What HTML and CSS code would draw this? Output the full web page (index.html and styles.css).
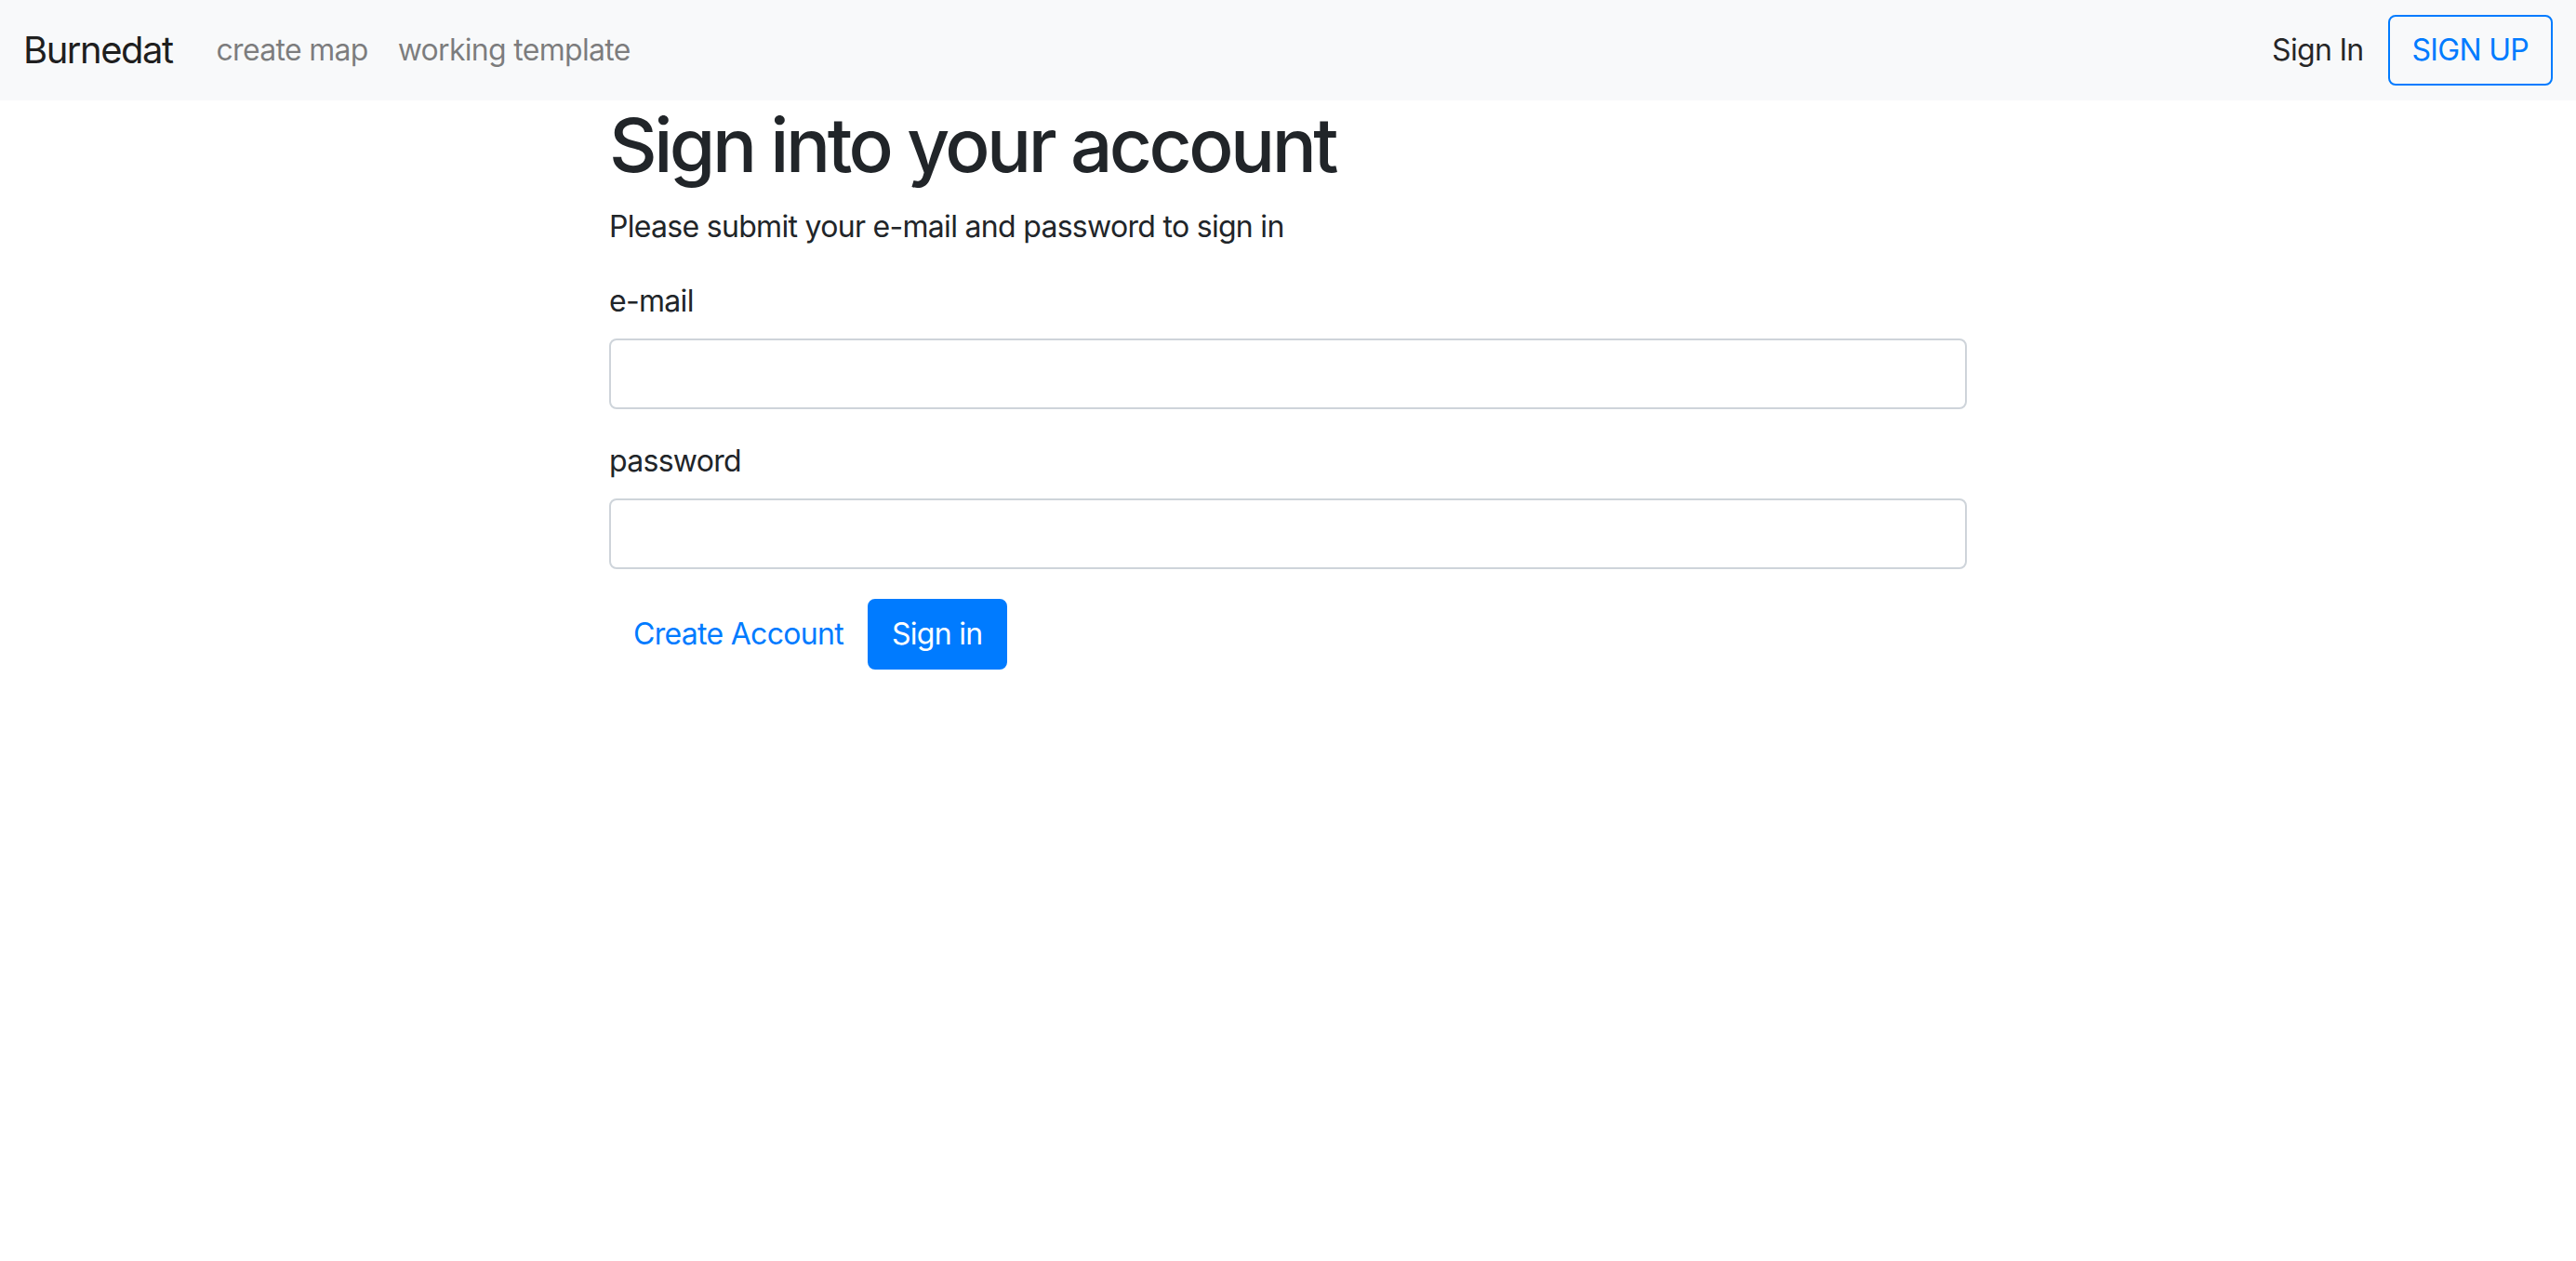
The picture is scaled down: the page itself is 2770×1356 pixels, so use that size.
FILE: index.html
```html
<!DOCTYPE html>
<html lang="en">
<head>
<meta charset="utf-8">
<title>Sign in - Burnedat</title>
<link rel="stylesheet" href="styles.css">
</head>
<body>
<nav class="navbar">
  <a class="brand" href="#">Burnedat</a>
  <ul class="nav-main">
    <li><a class="nav-link" href="#">create map</a></li>
    <li><a class="nav-link" href="#">working template</a></li>
  </ul>
  <div class="nav-right">
    <a class="nav-signin" href="#">Sign In</a>
    <a class="btn btn-outline" href="#">SIGN UP</a>
  </div>
</nav>
<main class="container">
  <h1 class="title">Sign into your account</h1>
  <p class="intro">Please submit your e-mail and password to sign in</p>
  <form class="signin-form">
    <div class="form-group">
      <label class="label" for="email">e-mail</label>
      <input class="input" id="email" type="email">
    </div>
    <div class="form-group">
      <label class="label" for="password">password</label>
      <input class="input" id="password" type="password">
    </div>
    <div class="actions">
      <a class="btn btn-link" href="#">Create Account</a>
      <button class="btn btn-primary" type="submit">Sign in</button>
    </div>
  </form>
</main>
</body>
</html>
```
FILE: styles.css
```css
* { box-sizing: border-box; }
html, body {
  margin: 0;
  padding: 0;
  background: #ffffff;
}
body {
  font-family: Inter, "Noto Sans", "Liberation Sans", sans-serif;
  color: #212529;
  font-size: 32px;
  line-height: 48px;
  letter-spacing: -0.7px;
}
a { text-decoration: none; }

.navbar {
  display: flex;
  align-items: center;
  height: 108px;
  padding: 0 25px 0 25px;
  background: #f8f9fa;
}
.brand {
  font-size: 40px;
  line-height: 60px;
  margin-right: 31px;
  letter-spacing: -1.5px;
  color: rgba(0, 0, 0, 0.9);
}
.nav-main {
  display: flex;
  list-style: none;
  margin: 0;
  padding: 0;
}
.nav-link {
  display: block;
  padding: 16px 16px;
  font-size: 32px;
  line-height: 48px;
  color: rgba(0, 0, 0, 0.5);
}
.nav-right {
  margin-left: auto;
  display: flex;
  align-items: center;
}
.nav-signin {
  padding: 16px 16px;
  margin-right: 10px;
  color: rgba(0, 0, 0, 0.86);
}

.btn {
  display: inline-block;
  font-family: inherit;
  font-size: 32px;
  line-height: 48px;
  letter-spacing: -0.7px;
  padding: 12px 24px;
  border: 2px solid transparent;
  border-radius: 8px;
  background: transparent;
  cursor: pointer;
}
.btn-outline {
  color: #007bff;
  border-color: #007bff;
}
.btn-link {
  color: #007bff;
}
.btn-primary {
  color: #ffffff;
  background: #007bff;
  border-color: #007bff;
}

.container {
  width: 1460px;
  margin: 0 auto;
}
.title {
  margin: 0 0 16px 0;
  font-size: 80px;
  line-height: 96px;
  font-weight: 500;
  letter-spacing: -3.5px;
}
.intro {
  margin: 0 0 32px 0;
}
.form-group {
  margin-bottom: 32px;
}
.label {
  display: inline-block;
  margin-bottom: 16px;
}
.input {
  display: block;
  width: 100%;
  height: 76px;
  padding: 12px 24px;
  font-family: inherit;
  font-size: 32px;
  color: #495057;
  background: #ffffff;
  border: 2px solid #ced4da;
  border-radius: 8px;
}
.actions {
  display: flex;
  align-items: center;
  gap: 0;
}
```
